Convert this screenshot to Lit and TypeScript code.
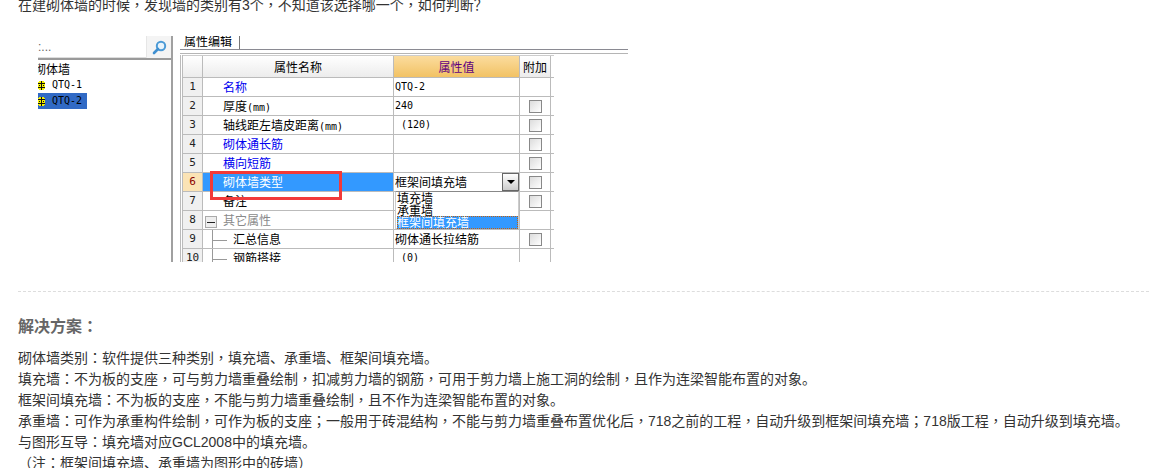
import { LitElement, html, css, svg } from "lit";
import { customElement } from "lit/decorators.js";

type Row = { n: string; name: string; val?: string; kind?: string; check?: boolean };

const rows: Row[] = [
  { n: "1", name: "名称", val: "QTQ-2", kind: "blue", check: false },
  { n: "2", name: "厚度(mm)", val: "240", check: true },
  { n: "3", name: "轴线距左墙皮距离(mm)", val: " (120)", check: true },
  { n: "4", name: "砌体通长筋", val: "", kind: "blue", check: true },
  { n: "5", name: "横向短筋", val: "", kind: "blue", check: true },
  { n: "6", name: "砌体墙类型", val: "框架间填充墙", kind: "sel", check: true },
  { n: "7", name: "备注", val: "", check: true },
  { n: "8", name: "其它属性", val: "", kind: "group", check: false },
  { n: "9", name: "汇总信息", val: "砌体通长拉结筋", kind: "tree", check: true },
  { n: "10", name: "钢筋搭接", val: " (0)", kind: "tree", check: false },
];

const lines = [
  "砌体墙类别：软件提供三种类别，填充墙、承重墙、框架间填充墙。",
  "填充墙：不为板的支座，可与剪力墙重叠绘制，扣减剪力墙的钢筋，可用于剪力墙上施工洞的绘制，且作为连梁智能布置的对象。",
  "框架间填充墙：不为板的支座，不能与剪力墙重叠绘制，且不作为连梁智能布置的对象。",
  "承重墙：可作为承重构件绘制，可作为板的支座；一般用于砖混结构，不能与剪力墙重叠布置优化后，718之前的工程，自动升级到框架间填充墙；718版工程，自动升级到填充墙。",
  "与图形互导：填充墙对应GCL2008中的填充墙。",
  "（注：框架间填充墙、承重墙为图形中的砖墙）",
];

/* The reference centres ，：； in their cell, which the Traditional Chinese font does. */
const punct = (text: string) =>
  text.split(/([，：；])/).map((part) => (/^[，：；]$/.test(part) ? html`<span class="tc">${part}</span>` : part));

const gem = svg`<svg class="gem" width="7" height="11" viewBox="0 0 7 11"><path d="M0 2h1V1h5v1h1v7H6v1H1V9H0z" fill="#f5f000"/><path d="M0 3h7v1H0zM0 7h7v1H0zM3 1h1v9H3zM1 5h1v1H1zM5 5h1v1H5z" fill="#111"/></svg>`;

@customElement("app-root")
export class AppRoot extends LitElement {
  static styles = css`
    :host {
      display: block;
      width: 1151px;
      height: 468px;
      overflow: hidden;
      background: #fff;
      font-family: "Liberation Sans", "Noto Sans CJK SC", sans-serif;
      color: #333;
    }
    .tc { font-family: "Noto Sans CJK TC", sans-serif; line-height: 0; }
    .page { display: flex; flex-direction: column; padding-left: 18px; }
    .question { margin: -1px 0 0; font-size: 14px; line-height: 12px; height: 12px; white-space: pre; }
    .shot {
      position: relative; width: 590px; height: 226px; margin: 25px 0 0 20px; overflow: hidden;
      display: flex; color: #000; font-size: 12px; font-family: "Noto Sans CJK SC", sans-serif;
    }
    .left { width: 133px; flex: none; display: flex; flex-direction: column; overflow: hidden; }
    .search { height: 22px; flex: none; display: flex; justify-content: space-between; border-bottom: 2px solid #9a9a9a; box-shadow: inset 0 -1px 0 #ddd; }
    .dots { font: 12px/22px "Liberation Sans", sans-serif; color: #666; }
    .mag { width: 24px; border-left: 1px solid #e6e6e6; background: #f4f4f4; display: flex; align-items: center; justify-content: center; }
    .tree { padding-top: 1px; }
    .tree-root { height: 16px; line-height: 16px; margin-left: -4px; white-space: pre; }
    .leaf { display: flex; align-items: center; gap: 7px; height: 16px; width: 49px; font: 10px/16px "DejaVu Sans Mono", monospace; }
    .leaf.on { background: #316ac5; }
    .split { width: 9px; flex: none; box-sizing: border-box; background: #fff; }
    .split::before { content: ""; display: block; width: 2px; height: 100%; background: #a0a0a0; }
    .right { flex: 1; display: flex; flex-direction: column; min-width: 0; }
    .tabs { height: 14px; flex: none; display: flex; border-bottom: 1px solid #8a8a92; box-sizing: border-box; }
    .tab { width: 60px; padding-left: 4px; box-sizing: border-box; border-right: 1px solid #777; font-size: 12px; line-height: 9px; overflow: hidden; white-space: pre; }
    .rule { height: 4px; flex: none; border-bottom: 1px solid #b5b5b5; box-sizing: border-box; margin-bottom: 1px; }
    .table { width: 371px; border-left: 3px double #bbb; }
    .row {
      display: grid; grid-template-columns: 20px 191px 126px 31px; height: 19px;
      border-bottom: 1px solid #bbb; box-sizing: border-box; line-height: 18px; font-size: 12px;
    }
    .row > div { border-right: 1px solid #bbb; box-sizing: border-box; white-space: pre; overflow: hidden; }
    .head { height: 23px; line-height: 22px; text-align: center; border-top: 1px solid #ccc; }
    .head > div { background: linear-gradient(#fff, #ececec); }
    .head > .val { background: linear-gradient(#fbdc9e, #f2c264); color: #60007f; }
    .num { background: #f0f0f0; text-align: center; font: 11px/18px "DejaVu Sans Mono", monospace; color: #222; }
    .name { padding-left: 20px; }
    .value { padding-left: 1px; font-size: 12px; }
    .mono { font: 10px/18px "DejaVu Sans Mono", monospace; }
    .chk { display: flex; align-items: center; justify-content: center; }
    .box { width: 11px; height: 11px; border: 1px solid #888; background: linear-gradient(135deg, #dcdcdc, #fff); }
    .blue .name { color: #0000f0; }
    .sel .name { background: #3399ff; color: #fff; }
    .sel .num { background: #fbe3b5; color: #8a0000; }
    .group .name { color: #8a8a8a; position: relative; }
    .minus {
      position: absolute; left: 2px; top: 5px; width: 12px; height: 12px; box-sizing: border-box;
      border: 1px solid #aaa; background: #eee; display: flex; align-items: center; justify-content: center;
    }
    .minus::after { content: ""; width: 8px; height: 1px; background: #222; }
    .tree-row .name { padding-left: 30px; position: relative; }
    .tree-row .name::before { content: ""; position: absolute; left: 9px; top: 0; bottom: 0; border-left: 1px solid #999; }
    .tree-row .name::after { content: ""; position: absolute; left: 9px; top: 10px; width: 15px; border-top: 1px solid #999; }
    .arrow {
      position: absolute; left: 464px; top: 137px; width: 17px; height: 18px; box-sizing: border-box;
      border: 1px solid #666; background: linear-gradient(#fff, #ccc); display: flex; align-items: center; justify-content: center;
    }
    .arrow::after { content: ""; border: 4px solid transparent; border-top: 4px solid #000; border-bottom: 0; }
    .drop {
      position: absolute; left: 357px; top: 155px; width: 124px; height: 38px; box-sizing: border-box;
      background: #fff; border: 1px solid #ccc; border-top-color: #888; font-size: 12px; line-height: 12px; padding-left: 1px;
    }
    .drop div { height: 12px; white-space: pre; }
    .drop .on { height: 13px; background: #3399ff; color: #fff; outline: 1px dotted #c06010; outline-offset: -1px; }
    .red { position: absolute; left: 172px; top: 135px; width: 132px; height: 29px; box-sizing: border-box; border: 3px solid #f23a3a; }
    .dash { width: 1131px; margin-top: 29px; border-top: 1px dashed #ddd; }
    h2 { margin: 25px 0 0; font-size: 16px; line-height: 20px; font-weight: bold; color: #666; }
    .body { margin-top: 11px; font-size: 14px; line-height: 21px; white-space: pre; }
    .unit { font: 10px/1 "DejaVu Sans Mono", monospace; }
  `;

  private name(text: string) {
    const i = text.indexOf("(mm)");
    return i < 0 ? text : html`${text.slice(0, i)}<span class="unit">(mm)</span>`;
  }

  render() {
    return html`<div class="page">
      <p class="question">${punct("在建砌体墙的时候，发现墙的类别有3个，不知道该选择哪一个，如何判断？")}</p>
      <div class="shot">
        <div class="left">
          <div class="search">
            <span class="dots">:...</span>
            <span class="mag"><svg width="15" height="15" viewBox="0 0 15 15"><circle cx="9" cy="6" r="4.2" fill="#e8f4fc" stroke="#4b9ad6" stroke-width="2"/><path d="M6 9l-4 4" stroke="#3f8fd0" stroke-width="2.6" stroke-linecap="round"/></svg></span>
          </div>
          <div class="tree">
            <div class="tree-root">砌体墙</div>
            <div class="leaf">${gem}<span>QTQ-1</span></div>
            <div class="leaf on">${gem}<span>QTQ-2</span></div>
          </div>
        </div>
        <div class="split"></div>
        <div class="right">
          <div class="tabs"><div class="tab">属性编辑</div></div>
          <div class="rule"></div>
          <div class="table">
            <div class="row head"><div></div><div>属性名称</div><div class="val">属性值</div><div>附加</div></div>
            ${rows.map(
              (r) => html`<div class="row ${r.kind === "tree" ? "tree-row" : r.kind ?? ""}">
                <div class="num">${r.n}</div>
                <div class="name">${r.kind === "group" ? html`<span class="minus"></span>` : ""}${this.name(r.name)}</div>
                <div class="value ${/^[ A-Z0-9]/.test(r.val ?? "") ? "mono" : ""}">${r.val}</div>
                <div class="chk">${r.check ? html`<span class="box"></span>` : ""}</div>
              </div>`
            )}
          </div>
        </div>
        <div class="arrow"></div>
        <div class="drop">
          <div>填充墙</div>
          <div>承重墙</div>
          <div class="on">框架间填充墙</div>
        </div>
        <div class="red"></div>
      </div>
      <div class="dash"></div>
      <h2>${punct("解决方案：")}</h2>
      <div class="body">${lines.map((l) => html`<div>${punct(l)}</div>`)}</div>
    </div>`;
  }
}
